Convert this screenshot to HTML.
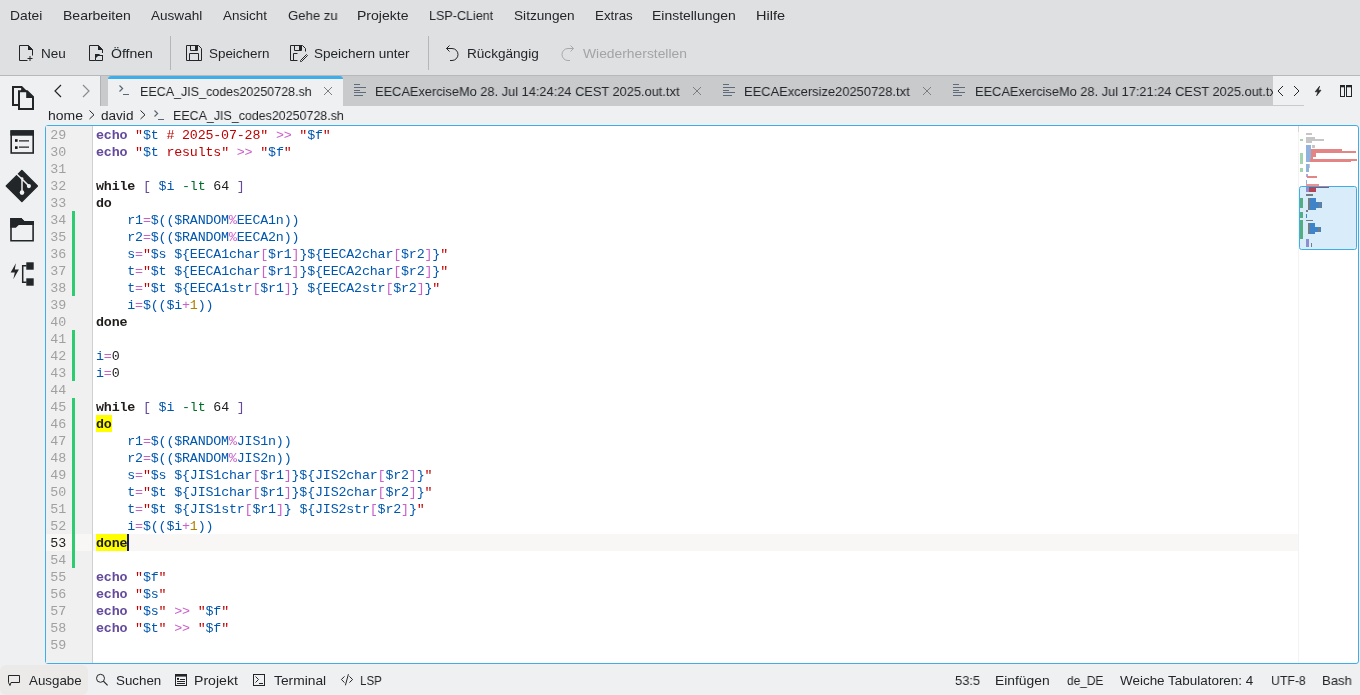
<!DOCTYPE html><html><head><meta charset="utf-8"><style>
*{margin:0;padding:0;box-sizing:border-box}
html,body{width:1360px;height:695px;overflow:hidden;background:#eff0f1;position:relative;font-family:"Liberation Sans", sans-serif}
.t{position:absolute;white-space:pre;line-height:15px;font-family:"Liberation Sans", sans-serif;font-size:13.333px;transform-origin:0 0}
.m{position:absolute;white-space:pre;font-family:"Liberation Mono", monospace;font-size:13.333px;line-height:17px;height:17px;letter-spacing:-0.18px}
.ln{left:46px;width:20px;text-align:right}
.cl{left:96px}
svg{position:absolute;overflow:visible}
.t,.m{will-change:transform}
</style></head><body>
<div style="position:absolute;left:0;top:0;width:1360px;height:75px;background:#dfe0e2"></div>
<div style="position:absolute;left:0;top:75px;width:1360px;height:1px;background:#b6b8ba"></div>
<div style="position:absolute;left:170px;top:36px;width:1px;height:34px;background:#b4b6b8"></div>
<div style="position:absolute;left:428px;top:36px;width:1px;height:34px;background:#b4b6b8"></div>
<div style="position:absolute;left:100px;top:76px;width:1173px;height:30px;background:#c9cacc"></div>
<div style="position:absolute;left:100px;top:76px;width:1px;height:30px;background:#b0b2b4"></div>
<div style="position:absolute;left:108px;top:76px;width:235px;height:31px;background:#eff0f1;border-radius:3px 3px 0 0"></div>
<div style="position:absolute;left:108px;top:76px;width:235px;height:3px;background:#3daee9;border-radius:3px 3px 0 0"></div>
<div style="position:absolute;left:975px;top:76px;width:298px;height:30px;overflow:hidden"><div class="t" style="left:0.1px;top:8px;color:#232629;transform:scaleX(0.9609)">EECAExerciseMo 28. Jul 17:21:24 CEST 2025.out.txt</div></div>
<div style="position:absolute;left:1273px;top:105px;width:31px;height:1px;background:#c9cacc"></div>
<div style="position:absolute;left:45px;top:125px;width:1314px;height:539px;border:1px solid #3daee9;border-radius:3px;background:#fff"></div>
<div style="position:absolute;left:46px;top:126px;width:46px;height:537px;background:#f0f0f0"></div>
<div style="position:absolute;left:92px;top:126px;width:1px;height:537px;background:#d0d0d0"></div>
<div style="position:absolute;left:1298px;top:126px;width:1px;height:537px;background:#f3f3f3"></div>
<div style="position:absolute;left:1298px;top:126px;width:1px;height:6px;background:#d6d6d6"></div>
<div style="position:absolute;left:93px;top:534px;width:1205px;height:17px;background:#f8f7f6"></div>
<div style="position:absolute;left:46px;top:534px;width:46px;height:17px;background:#f8f7f6"></div>
<div style="position:absolute;left:96px;top:534px;width:31px;height:17px;background:#ffff00"></div>
<div style="position:absolute;left:96px;top:415px;width:16px;height:17px;background:#ffff00"></div>
<div class="m ln" style="top:127px;color:#a0a0a0">29</div>
<div class="m cl" style="top:127px"><span style="color:#644a9b;font-weight:bold">echo</span><span style="color:#1f1c1b"> </span><span style="color:#bf0303">&quot;</span><span style="color:#0057ae">$t</span><span style="color:#bf0303"> # 2025-07-28</span><span style="color:#bf0303">&quot;</span><span style="color:#1f1c1b"> </span><span style="color:#ca60ca">&gt;&gt;</span><span style="color:#1f1c1b"> </span><span style="color:#bf0303">&quot;</span><span style="color:#0057ae">$f</span><span style="color:#bf0303">&quot;</span></div>
<div class="m ln" style="top:144px;color:#a0a0a0">30</div>
<div class="m cl" style="top:144px"><span style="color:#644a9b;font-weight:bold">echo</span><span style="color:#1f1c1b"> </span><span style="color:#bf0303">&quot;</span><span style="color:#0057ae">$t</span><span style="color:#bf0303"> results</span><span style="color:#bf0303">&quot;</span><span style="color:#1f1c1b"> </span><span style="color:#ca60ca">&gt;&gt;</span><span style="color:#1f1c1b"> </span><span style="color:#bf0303">&quot;</span><span style="color:#0057ae">$f</span><span style="color:#bf0303">&quot;</span></div>
<div class="m ln" style="top:161px;color:#a0a0a0">31</div>
<div class="m ln" style="top:178px;color:#a0a0a0">32</div>
<div class="m cl" style="top:178px"><span style="color:#1f1c1b;font-weight:bold">while</span><span style="color:#1f1c1b"> </span><span style="color:#644a9b">[</span><span style="color:#1f1c1b"> </span><span style="color:#0057ae">$i</span><span style="color:#1f1c1b"> </span><span style="color:#006e28">-lt</span><span style="color:#1f1c1b"> 64 </span><span style="color:#644a9b">]</span></div>
<div class="m ln" style="top:195px;color:#a0a0a0">33</div>
<div class="m cl" style="top:195px"><span style="color:#1f1c1b;font-weight:bold">do</span></div>
<div class="m ln" style="top:212px;color:#a0a0a0">34</div>
<div class="m cl" style="top:212px"><span style="color:#1f1c1b">    </span><span style="color:#0057ae">r1</span><span style="color:#ca60ca">=</span><span style="color:#0057ae">$(($RANDOM</span><span style="color:#ca60ca">%</span><span style="color:#0057ae">EECA1n))</span></div>
<div class="m ln" style="top:229px;color:#a0a0a0">35</div>
<div class="m cl" style="top:229px"><span style="color:#1f1c1b">    </span><span style="color:#0057ae">r2</span><span style="color:#ca60ca">=</span><span style="color:#0057ae">$(($RANDOM</span><span style="color:#ca60ca">%</span><span style="color:#0057ae">EECA2n))</span></div>
<div class="m ln" style="top:246px;color:#a0a0a0">36</div>
<div class="m cl" style="top:246px"><span style="color:#1f1c1b">    </span><span style="color:#0057ae">s</span><span style="color:#ca60ca">=</span><span style="color:#bf0303">&quot;</span><span style="color:#0057ae">$s</span><span style="color:#bf0303"> </span><span style="color:#0057ae">${EECA1char</span><span style="color:#ca60ca">[</span><span style="color:#0057ae">$r1</span><span style="color:#ca60ca">]</span><span style="color:#0057ae">}${EECA2char</span><span style="color:#ca60ca">[</span><span style="color:#0057ae">$r2</span><span style="color:#ca60ca">]</span><span style="color:#0057ae">}</span><span style="color:#bf0303">&quot;</span></div>
<div class="m ln" style="top:263px;color:#a0a0a0">37</div>
<div class="m cl" style="top:263px"><span style="color:#1f1c1b">    </span><span style="color:#0057ae">t</span><span style="color:#ca60ca">=</span><span style="color:#bf0303">&quot;</span><span style="color:#0057ae">$t</span><span style="color:#bf0303"> </span><span style="color:#0057ae">${EECA1char</span><span style="color:#ca60ca">[</span><span style="color:#0057ae">$r1</span><span style="color:#ca60ca">]</span><span style="color:#0057ae">}${EECA2char</span><span style="color:#ca60ca">[</span><span style="color:#0057ae">$r2</span><span style="color:#ca60ca">]</span><span style="color:#0057ae">}</span><span style="color:#bf0303">&quot;</span></div>
<div class="m ln" style="top:280px;color:#a0a0a0">38</div>
<div class="m cl" style="top:280px"><span style="color:#1f1c1b">    </span><span style="color:#0057ae">t</span><span style="color:#ca60ca">=</span><span style="color:#bf0303">&quot;</span><span style="color:#0057ae">$t</span><span style="color:#bf0303"> </span><span style="color:#0057ae">${EECA1str</span><span style="color:#ca60ca">[</span><span style="color:#0057ae">$r1</span><span style="color:#ca60ca">]</span><span style="color:#0057ae">}</span><span style="color:#bf0303"> </span><span style="color:#0057ae">${EECA2str</span><span style="color:#ca60ca">[</span><span style="color:#0057ae">$r2</span><span style="color:#ca60ca">]</span><span style="color:#0057ae">}</span><span style="color:#bf0303">&quot;</span></div>
<div class="m ln" style="top:297px;color:#a0a0a0">39</div>
<div class="m cl" style="top:297px"><span style="color:#1f1c1b">    </span><span style="color:#0057ae">i</span><span style="color:#ca60ca">=</span><span style="color:#0057ae">$(($i</span><span style="color:#ca60ca">+</span><span style="color:#b08000">1</span><span style="color:#0057ae">))</span></div>
<div class="m ln" style="top:314px;color:#a0a0a0">40</div>
<div class="m cl" style="top:314px"><span style="color:#1f1c1b;font-weight:bold">done</span></div>
<div class="m ln" style="top:331px;color:#a0a0a0">41</div>
<div class="m ln" style="top:348px;color:#a0a0a0">42</div>
<div class="m cl" style="top:348px"><span style="color:#0057ae">i</span><span style="color:#ca60ca">=</span><span style="color:#1f1c1b">0</span></div>
<div class="m ln" style="top:365px;color:#a0a0a0">43</div>
<div class="m cl" style="top:365px"><span style="color:#0057ae">i</span><span style="color:#ca60ca">=</span><span style="color:#1f1c1b">0</span></div>
<div class="m ln" style="top:382px;color:#a0a0a0">44</div>
<div class="m ln" style="top:399px;color:#a0a0a0">45</div>
<div class="m cl" style="top:399px"><span style="color:#1f1c1b;font-weight:bold">while</span><span style="color:#1f1c1b"> </span><span style="color:#644a9b">[</span><span style="color:#1f1c1b"> </span><span style="color:#0057ae">$i</span><span style="color:#1f1c1b"> </span><span style="color:#006e28">-lt</span><span style="color:#1f1c1b"> 64 </span><span style="color:#644a9b">]</span></div>
<div class="m ln" style="top:416px;color:#a0a0a0">46</div>
<div class="m cl" style="top:416px"><span style="color:#1f1c1b;font-weight:bold">do</span></div>
<div class="m ln" style="top:433px;color:#a0a0a0">47</div>
<div class="m cl" style="top:433px"><span style="color:#1f1c1b">    </span><span style="color:#0057ae">r1</span><span style="color:#ca60ca">=</span><span style="color:#0057ae">$(($RANDOM</span><span style="color:#ca60ca">%</span><span style="color:#0057ae">JIS1n))</span></div>
<div class="m ln" style="top:450px;color:#a0a0a0">48</div>
<div class="m cl" style="top:450px"><span style="color:#1f1c1b">    </span><span style="color:#0057ae">r2</span><span style="color:#ca60ca">=</span><span style="color:#0057ae">$(($RANDOM</span><span style="color:#ca60ca">%</span><span style="color:#0057ae">JIS2n))</span></div>
<div class="m ln" style="top:467px;color:#a0a0a0">49</div>
<div class="m cl" style="top:467px"><span style="color:#1f1c1b">    </span><span style="color:#0057ae">s</span><span style="color:#ca60ca">=</span><span style="color:#bf0303">&quot;</span><span style="color:#0057ae">$s</span><span style="color:#bf0303"> </span><span style="color:#0057ae">${JIS1char</span><span style="color:#ca60ca">[</span><span style="color:#0057ae">$r1</span><span style="color:#ca60ca">]</span><span style="color:#0057ae">}${JIS2char</span><span style="color:#ca60ca">[</span><span style="color:#0057ae">$r2</span><span style="color:#ca60ca">]</span><span style="color:#0057ae">}</span><span style="color:#bf0303">&quot;</span></div>
<div class="m ln" style="top:484px;color:#a0a0a0">50</div>
<div class="m cl" style="top:484px"><span style="color:#1f1c1b">    </span><span style="color:#0057ae">t</span><span style="color:#ca60ca">=</span><span style="color:#bf0303">&quot;</span><span style="color:#0057ae">$t</span><span style="color:#bf0303"> </span><span style="color:#0057ae">${JIS1char</span><span style="color:#ca60ca">[</span><span style="color:#0057ae">$r1</span><span style="color:#ca60ca">]</span><span style="color:#0057ae">}${JIS2char</span><span style="color:#ca60ca">[</span><span style="color:#0057ae">$r2</span><span style="color:#ca60ca">]</span><span style="color:#0057ae">}</span><span style="color:#bf0303">&quot;</span></div>
<div class="m ln" style="top:501px;color:#a0a0a0">51</div>
<div class="m cl" style="top:501px"><span style="color:#1f1c1b">    </span><span style="color:#0057ae">t</span><span style="color:#ca60ca">=</span><span style="color:#bf0303">&quot;</span><span style="color:#0057ae">$t</span><span style="color:#bf0303"> </span><span style="color:#0057ae">${JIS1str</span><span style="color:#ca60ca">[</span><span style="color:#0057ae">$r1</span><span style="color:#ca60ca">]</span><span style="color:#0057ae">}</span><span style="color:#bf0303"> </span><span style="color:#0057ae">${JIS2str</span><span style="color:#ca60ca">[</span><span style="color:#0057ae">$r2</span><span style="color:#ca60ca">]</span><span style="color:#0057ae">}</span><span style="color:#bf0303">&quot;</span></div>
<div class="m ln" style="top:518px;color:#a0a0a0">52</div>
<div class="m cl" style="top:518px"><span style="color:#1f1c1b">    </span><span style="color:#0057ae">i</span><span style="color:#ca60ca">=</span><span style="color:#0057ae">$(($i</span><span style="color:#ca60ca">+</span><span style="color:#b08000">1</span><span style="color:#0057ae">))</span></div>
<div class="m ln" style="top:535px;color:#1f1c1b">53</div>
<div class="m cl" style="top:535px"><span style="color:#1f1c1b;font-weight:bold">done</span></div>
<div class="m ln" style="top:552px;color:#a0a0a0">54</div>
<div class="m ln" style="top:569px;color:#a0a0a0">55</div>
<div class="m cl" style="top:569px"><span style="color:#644a9b;font-weight:bold">echo</span><span style="color:#1f1c1b"> </span><span style="color:#bf0303">&quot;</span><span style="color:#0057ae">$f</span><span style="color:#bf0303">&quot;</span></div>
<div class="m ln" style="top:586px;color:#a0a0a0">56</div>
<div class="m cl" style="top:586px"><span style="color:#644a9b;font-weight:bold">echo</span><span style="color:#1f1c1b"> </span><span style="color:#bf0303">&quot;</span><span style="color:#0057ae">$s</span><span style="color:#bf0303">&quot;</span></div>
<div class="m ln" style="top:603px;color:#a0a0a0">57</div>
<div class="m cl" style="top:603px"><span style="color:#644a9b;font-weight:bold">echo</span><span style="color:#1f1c1b"> </span><span style="color:#bf0303">&quot;</span><span style="color:#0057ae">$s</span><span style="color:#bf0303">&quot;</span><span style="color:#1f1c1b"> </span><span style="color:#ca60ca">&gt;&gt;</span><span style="color:#1f1c1b"> </span><span style="color:#bf0303">&quot;</span><span style="color:#0057ae">$f</span><span style="color:#bf0303">&quot;</span></div>
<div class="m ln" style="top:620px;color:#a0a0a0">58</div>
<div class="m cl" style="top:620px"><span style="color:#644a9b;font-weight:bold">echo</span><span style="color:#1f1c1b"> </span><span style="color:#bf0303">&quot;</span><span style="color:#0057ae">$t</span><span style="color:#bf0303">&quot;</span><span style="color:#1f1c1b"> </span><span style="color:#ca60ca">&gt;&gt;</span><span style="color:#1f1c1b"> </span><span style="color:#bf0303">&quot;</span><span style="color:#0057ae">$f</span><span style="color:#bf0303">&quot;</span></div>
<div class="m ln" style="top:637px;color:#a0a0a0">59</div>
<div style="position:absolute;left:72px;top:211px;width:3px;height:85px;background:#2ecc71"></div>
<div style="position:absolute;left:72px;top:330px;width:3px;height:51px;background:#2ecc71"></div>
<div style="position:absolute;left:72px;top:398px;width:3px;height:170px;background:#2ecc71"></div>
<div style="position:absolute;left:127px;top:534px;width:2px;height:17px;background:#1b1b6b"></div>
<div style="position:absolute;left:0;top:665px;width:88px;height:30px;background:#ebeae9;border-radius:6px"></div>
<div class="t" style="left:9.56px;top:8px;color:#232629;transform:scaleX(1.0380)">Datei</div>
<div class="t" style="left:62.70px;top:8px;color:#232629;transform:scaleX(1.0507)">Bearbeiten</div>
<div class="t" style="left:151.25px;top:8px;color:#232629;transform:scaleX(1.0165)">Auswahl</div>
<div class="t" style="left:223.25px;top:8px;color:#232629;transform:scaleX(1.0056)">Ansicht</div>
<div class="t" style="left:288.25px;top:8px;color:#232629;transform:scaleX(0.9856)">Gehe zu</div>
<div class="t" style="left:357.20px;top:8px;color:#232629;transform:scaleX(1.0530)">Projekte</div>
<div class="t" style="left:428.56px;top:8px;color:#232629;transform:scaleX(0.9414)">LSP-CLient</div>
<div class="t" style="left:514.25px;top:8px;color:#232629;transform:scaleX(1.0235)">Sitzungen</div>
<div class="t" style="left:594.50px;top:8px;color:#232629;transform:scaleX(0.9971)">Extras</div>
<div class="t" style="left:652.20px;top:8px;color:#232629;transform:scaleX(1.0462)">Einstellungen</div>
<div class="t" style="left:755.66px;top:8px;color:#232629;transform:scaleX(1.0891)">Hilfe</div>
<div class="t" style="left:40.58px;top:46px;color:#232629;transform:scaleX(1.0157)">Neu</div>
<div class="t" style="left:111.00px;top:46px;color:#232629;transform:scaleX(1.0544)">Öffnen</div>
<div class="t" style="left:209.40px;top:46px;color:#232629;transform:scaleX(1.0067)">Speichern</div>
<div class="t" style="left:314.40px;top:46px;color:#232629;transform:scaleX(1.0163)">Speichern unter</div>
<div class="t" style="left:466.78px;top:46px;color:#232629;transform:scaleX(1.0192)">Rückgängig</div>
<div class="t" style="left:583.00px;top:46px;color:#a2a4a6;transform:scaleX(1.0392)">Wiederherstellen</div>
<div class="t" style="left:139.66px;top:84px;color:#232629;transform:scaleX(0.9383)">EECA_JIS_codes20250728.sh</div>
<div class="t" style="left:375.04px;top:84px;color:#232629;transform:scaleX(0.9609)">EECAExerciseMo 28. Jul 14:24:24 CEST 2025.out.txt</div>
<div class="t" style="left:744.03px;top:84px;color:#232629;transform:scaleX(0.9681)">EECAExcersize20250728.txt</div>
<div class="t" style="left:47.50px;top:108px;color:#232629;transform:scaleX(1.0478)">home</div>
<div class="t" style="left:100.50px;top:108px;color:#232629;transform:scaleX(1.0175)">david</div>
<div class="t" style="left:173.07px;top:108px;color:#232629;transform:scaleX(0.9333)">EECA_JIS_codes20250728.sh</div>
<div class="t" style="left:28.75px;top:673px;color:#232629;transform:scaleX(1.0009)">Ausgabe</div>
<div class="t" style="left:116.00px;top:673px;color:#232629;transform:scaleX(0.9957)">Suchen</div>
<div class="t" style="left:194.34px;top:673px;color:#232629;transform:scaleX(1.0569)">Projekt</div>
<div class="t" style="left:273.50px;top:673px;color:#232629;transform:scaleX(1.0356)">Terminal</div>
<div class="t" style="left:360.14px;top:673px;color:#232629;transform:scaleX(0.8641)">LSP</div>
<div class="t" style="left:954.60px;top:673px;color:#232629;transform:scaleX(0.9676)">53:5</div>
<div class="t" style="left:995.26px;top:673px;color:#232629;transform:scaleX(1.0390)">Einfügen</div>
<div class="t" style="left:1066.50px;top:673px;color:#232629;transform:scaleX(0.8932)">de_DE</div>
<div class="t" style="left:1120.40px;top:673px;color:#232629;transform:scaleX(1.0085)">Weiche Tabulatoren: 4</div>
<div class="t" style="left:1270.58px;top:673px;color:#232629;transform:scaleX(0.9217)">UTF-8</div>
<div class="t" style="left:1321.62px;top:673px;color:#232629;transform:scaleX(0.9804)">Bash</div>

<svg width="1360" height="695" style="left:0;top:0;position:absolute" fill="none" stroke-linecap="butt">
<g stroke="#232629" stroke-width="1">
 <!-- Neu -->
 <path d="M28.5,45.5 H19.5 V60.5 H27.5 M28.5,45.5 L32.5,49.5 V55.5"/>
 <path d="M28,45 L33,50 H28 Z" fill="#232629" stroke="none"/>
 <path d="M27.5,58.5 H32.5 M30,56 V61"/>
 <!-- Oeffnen -->
 <path d="M98.5,45.5 H89.5 V60.5 H95.5 M98.5,45.5 L102.5,49.5 V53"/>
 <path d="M98,45 L103,50 H98 Z" fill="#232629" stroke="none"/>
 <path d="M95.5,54.5 H99 L100,55.5 H102.5 V60.5 H95.5 Z"/>
 <path d="M95,54 H99 L100,55 H103 V56 H98 L96,58 H95 Z" fill="#232629" stroke="none"/>
 <!-- Speichern -->
 <path d="M186.5,45.5 H198.5 L201.5,48.5 V60.5 H186.5 Z"/>
 <path d="M190.5,45.5 V50.5 H197.5 V45.5"/>
 <rect x="195" y="46" width="2" height="4" fill="#232629" stroke="none"/>
 <path d="M189.5,60.5 V53.5 H198.5 V60.5"/>
 <!-- Speichern unter -->
 <path d="M297.5,60.5 H290.5 V45.5 H302.5 L305.5,48.5 V51.5"/>
 <path d="M294.5,45.5 V50.5 H301.5 V45.5"/>
 <rect x="299" y="46" width="2" height="4" fill="#232629" stroke="none"/>
 <path d="M293.5,60.5 V53.5 H297.5"/>
 <path d="M300.5,60.5 L306.5,54.5 L307.5,55.5 L301.5,61.5 H300.5 Z"/>
 <!-- Undo -->
 <path d="M449.5,45.5 L446.5,48.5 L449.5,51.5 M446.5,48.5 H452 A6,6 0 0 1 452,60.5 H450"/>
</g>
<!-- Redo (disabled) -->
<path d="M570.5,45.5 L573.5,48.5 L570.5,51.5 M573.5,48.5 H568 A6,6 0 0 0 568,60.5 H570" stroke="#a6a8aa" stroke-width="1"/>
<!-- toolbar separators drawn as divs -->
<!-- tab bar left chevrons -->
<path d="M61,85 L55,91 L61,97" stroke="#232629" stroke-width="1.2"/>
<path d="M83,85 L89,91 L83,97" stroke="#8a8c8e" stroke-width="1.2"/>
<!-- terminal icons -->
<g stroke="#5b6676" stroke-width="1.2">
 <path d="M119.5,85.5 L122.6,88.5 L119.5,91.5 M123,94.5 H129"/>
 <path d="M154.5,110.5 L157.6,113.5 L154.5,116.5 M158,119.5 H164"/>
</g>
<!-- text-file icons -->
<g stroke="#5f6b7a" stroke-width="1">
 <path d="M354,84.5 H360 M354,87.5 H366 M354,90.5 H360 M354,92.5 H366 M354,95.5 H363"/>
 <path d="M723,84.5 H729 M723,87.5 H735 M723,90.5 H729 M723,92.5 H735 M723,95.5 H732"/>
 <path d="M953,84.5 H959 M953,87.5 H965 M953,90.5 H959 M953,92.5 H965 M953,95.5 H962"/>
</g>
<!-- close X -->
<g stroke="#7b7d80" stroke-width="1">
 <path d="M324,87 L332,95 M332,87 L324,95"/>
 <path d="M693,87 L701,95 M701,87 L693,95"/>
 <path d="M923,87 L931,95 M931,87 L923,95"/>
</g>
<!-- breadcrumb chevrons -->
<g stroke="#232629" stroke-width="1">
 <path d="M89.5,110.5 L94,114.8 L89.5,119"/>
 <path d="M140.5,110.5 L145,114.8 L140.5,119"/>
</g>
<!-- right tab buttons -->
<path d="M1283,86 L1278,91 L1283,96" stroke="#232629" stroke-width="1"/>
<path d="M1294,86 L1299,91 L1294,96" stroke="#232629" stroke-width="1"/>
<path d="M1319.6,86.2 L1315.2,91.8 H1318 L1316.6,95.8 L1321,90.2 H1318.3 Z" fill="#232629" stroke="#232629" stroke-width="0.7" stroke-linejoin="round"/>
<g stroke="#232629" stroke-width="1">
 <rect x="1340.5" y="85.5" width="4" height="11"/>
 <rect x="1346.5" y="85.5" width="5" height="11"/>
</g>
<rect x="1340" y="85" width="5" height="2.3" fill="#232629"/>
<rect x="1346" y="85" width="6" height="2.3" fill="#232629"/>
<!-- left sidebar -->
<g stroke="#232629" stroke-width="2">
 <path d="M18,105 H13 V87 H21.5 L25.5,91"/>
 <path d="M19,91.2 H27.2 L33,97 V109 H19 Z"/>
</g>
<path d="M26.2,90.2 L34,98 H26.2 Z" fill="#232629"/>
<path d="M21.5,86 L26.5,91 H21 Z" fill="#232629"/>
<rect x="11.2" y="131" width="22" height="22" stroke="#232629" stroke-width="1.6"/>
<rect x="10.4" y="130.3" width="23.4" height="5.4" fill="#232629"/>
<rect x="15" y="139.2" width="2.6" height="2.6" fill="#111"/>
<rect x="15" y="146.3" width="2.6" height="2.6" fill="#111"/>
<path d="M19,140.9 H29 M19,147.2 H29" stroke="#232629" stroke-width="1.3"/>
<!-- git -->
<path d="M21.9,170.5 L37.4,186 L21.9,201.5 L6.3,186 Z" fill="#232629" stroke="#232629" stroke-width="1.5" stroke-linejoin="round"/>
<path d="M15.5,173 L22,179 L22,193 M22,179 L29,186" stroke="#eff0f1" stroke-width="1.5"/>
<circle cx="22" cy="192.6" r="2.3" fill="#eff0f1"/>
<circle cx="28.9" cy="186.1" r="2.1" fill="#eff0f1"/>
<circle cx="22" cy="178.6" r="1.4" fill="#eff0f1"/>
<!-- folder -->
<path d="M11,218.9 H21 L24,221.9 H33.1 V240.8 H11 Z" stroke="#232629" stroke-width="1.6" stroke-linejoin="miter"/>
<path d="M10.2,218.1 H21.3 L24.2,221.1 H33.9 V224.9 H18.8 L15.8,227.8 H10.2 Z" fill="#232629"/>
<!-- plugin -->
<path d="M15.9,263.2 L10.6,272.4 H14.8 L13.3,279.3 L18.9,269.6 H14.8 Z" fill="#232629"/>
<path d="M26.5,265.7 H22.7 V282.3 H26.5" stroke="#232629" stroke-width="1.5"/>
<rect x="26.3" y="262.3" width="7.4" height="7.4" fill="#232629"/>
<rect x="26.3" y="278.3" width="7.4" height="7.4" fill="#232629"/>
<!-- status bar icons -->
<g stroke="#232629" stroke-width="1">
 <path d="M8.5,675.5 H19.5 V682.5 H11 L10,685.5 L8.5,682.5 Z" stroke-linejoin="miter"/>
 <circle cx="100.5" cy="678.3" r="4"/>
 <path d="M103.4,681.2 L107.6,685.4" stroke-width="1.2"/>
 <rect x="175.5" y="674.5" width="11" height="11"/>
 <path d="M180,679.5 H185 M177,681.5 H185 M177,683.5 H185"/>
 <rect x="253.5" y="674.5" width="11" height="11"/>
 <path d="M255.5,676.5 L258.5,679.5 L255.5,682.5 M259,683.5 H263"/>
 <path d="M344.5,676.4 L341.4,679.5 L344.5,682.6 M349.4,676.4 L352.6,679.5 L349.4,682.6 M348.4,674.2 L345.4,685.3"/>
</g>
<rect x="175" y="674" width="12" height="2.6" fill="#232629"/>
<rect x="177" y="678" width="2" height="1.8" fill="#111"/>
</svg>

<svg width="1360" height="695" style="left:0;top:0;position:absolute"><rect x="1306" y="133" width="6" height="2" fill="#c6c6c6"/><rect x="1306" y="137" width="9" height="2" fill="#c6c6c6"/><rect x="1306" y="139" width="18" height="2" fill="#c6c6c6"/><rect x="1306" y="141" width="6" height="2" fill="#c6c6c6"/><rect x="1300" y="139" width="3" height="2" fill="#a3d4ae"/><rect x="1306" y="145" width="5" height="17" fill="#8fb3dc"/><rect x="1312" y="145" width="3" height="3" fill="#c6c6c6"/><rect x="1311" y="149" width="31" height="2" fill="#e38585"/><rect x="1311" y="151" width="45" height="2" fill="#e38585"/><rect x="1311" y="153" width="5" height="4" fill="#e38585"/><rect x="1311" y="157" width="2" height="2" fill="#e38585"/><rect x="1310" y="159" width="47" height="2" fill="#e38585"/><rect x="1310" y="161" width="41" height="1" fill="#e38585"/><rect x="1300" y="153" width="3" height="11" fill="#a3d4ae"/><rect x="1306" y="164" width="3" height="8" fill="#8fb3dc"/><rect x="1309" y="164" width="1" height="4" fill="#c6c6c6"/><rect x="1300" y="168" width="3" height="4" fill="#a3d4ae"/><rect x="1306" y="174" width="2" height="3" fill="#a9a9dd"/><rect x="1307" y="176" width="10" height="2" fill="#e38585"/><rect x="1306" y="180" width="1" height="4" fill="#8fb3dc"/><rect x="1306" y="184" width="13" height="2" fill="#e59595"/><rect x="1299.5" y="186.5" width="57" height="63" rx="2" fill="#d9ecf9" stroke="#3daee9" stroke-width="1"/><rect x="1306" y="187" width="3" height="5" fill="#8c8fcf"/><rect x="1309" y="187" width="7" height="5" fill="#b24656"/><rect x="1316" y="187" width="13" height="1" fill="#b24656"/><rect x="1306" y="194" width="7" height="2" fill="#737d86"/><rect x="1300" y="198" width="3" height="10" fill="#52ad80"/><rect x="1308" y="198" width="8" height="12" fill="#3f84c9"/><rect x="1308" y="198" width="2" height="12" fill="#737d86"/><rect x="1314" y="202" width="8" height="6" fill="#3f84c9"/><rect x="1319" y="202" width="2" height="6" fill="#737d86"/><rect x="1306" y="210" width="2" height="2" fill="#737d86"/><rect x="1300" y="212" width="3" height="6" fill="#52ad80"/><rect x="1306" y="214" width="1" height="4" fill="#3f84c9"/><rect x="1306" y="220" width="7" height="1" fill="#737d86"/><rect x="1300" y="220" width="3" height="19" fill="#52ad80"/><rect x="1308" y="223" width="7" height="11" fill="#3f84c9"/><rect x="1308" y="223" width="2" height="11" fill="#737d86"/><rect x="1314" y="227" width="7" height="5" fill="#3f84c9"/><rect x="1318" y="227" width="2" height="5" fill="#737d86"/><rect x="1306" y="239" width="3" height="8" fill="#8c8fcf"/><rect x="1311" y="243" width="1" height="4" fill="#737d86"/></svg>
</body></html>
